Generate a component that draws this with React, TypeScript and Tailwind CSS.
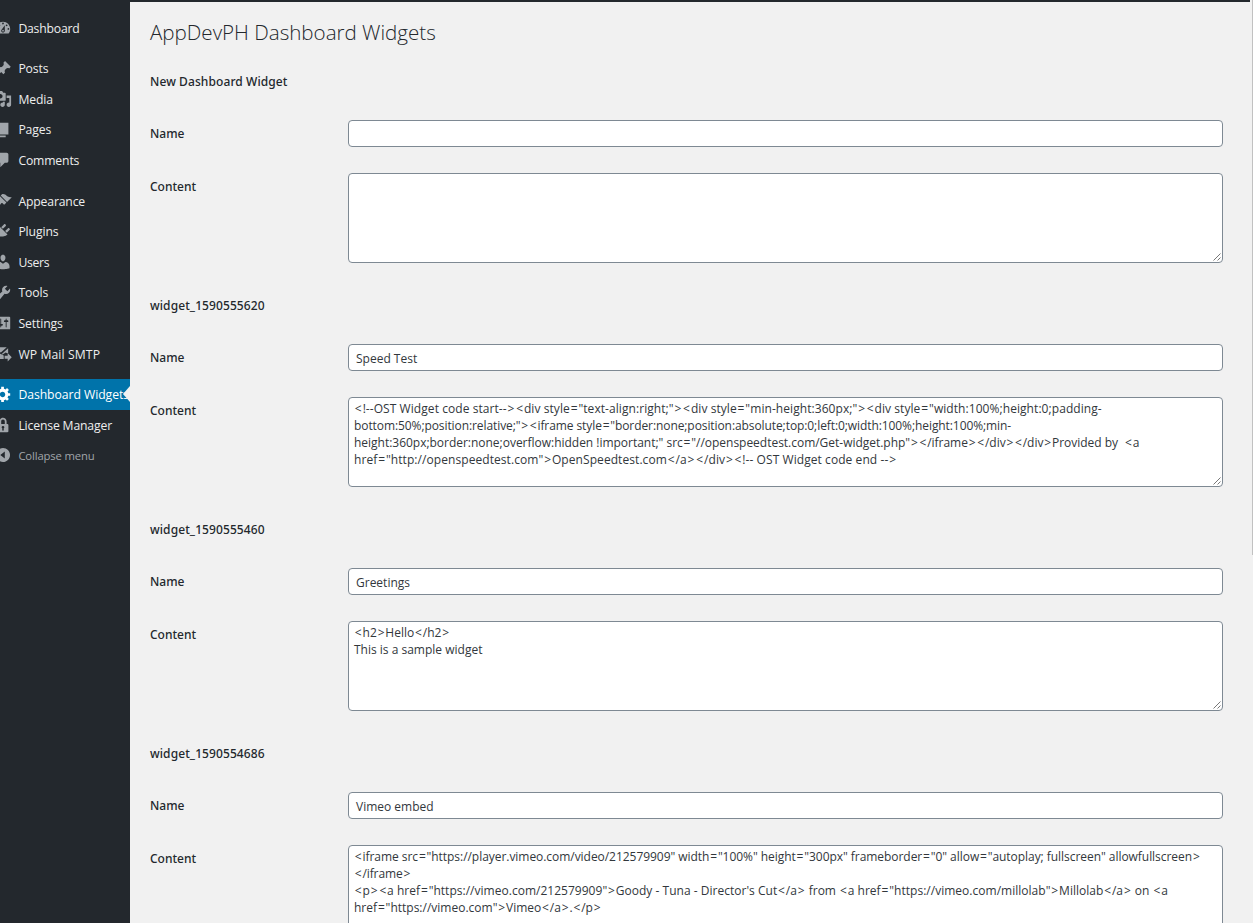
import type { ReactNode } from "react";

type MenuEntry = { label: string; d: string; gap?: boolean; active?: boolean; muted?: boolean; raised?: boolean; tracking?: string };

const menu: MenuEntry[] = [
  { label: "Dashboard", tracking: "tracking-[-0.2px]", d: "M3.76 16h12.48c1.1-1.37 1.76-3.11 1.76-5 0-4.42-3.58-8-8-8s-8 3.58-8 8c0 1.89.66 3.63 1.76 5zM10 4c.55 0 1 .45 1 1s-.45 1-1 1-1-.45-1-1 .45-1 1-1zM6 6c.55 0 1 .45 1 1s-.45 1-1 1-1-.45-1-1 .45-1 1-1zm8 0c.55 0 1 .45 1 1s-.45 1-1 1-1-.45-1-1 .45-1 1-1zm-5.37 5.55L12 7v6c0 1.1-.9 2-2 2s-2-.9-2-2c0-.57.24-1.08.63-1.45zM4 10c.55 0 1 .45 1 1s-.45 1-1 1-1-.45-1-1 .45-1 1-1zm12 0c.55 0 1 .45 1 1s-.45 1-1 1-1-.45-1-1 .45-1 1-1zm-5 3c0-.55-.45-1-1-1s-1 .45-1 1 .45 1 1 1 1-.45 1-1z" },
  { label: "Posts", gap: true, raised: true, d: "M10.44 3.02l1.82-1.82 6.36 6.35-1.83 1.82c-1.05-.68-2.48-.57-3.41.36l-.75.75c-.92.93-1.04 2.35-.35 3.41l-1.83 1.82-2.41-2.41-2.8 2.79c-.42.42-3.38 2.71-3.8 2.29s1.86-3.39 2.28-3.81l2.79-2.79L4.1 9.36l1.83-1.82c1.05.69 2.48.57 3.4-.36l.75-.75c.93-.92 1.05-2.35.36-3.41z" },
  { label: "Media", d: "M13 11V4c0-.55-.45-1-1-1h-1.67L9 1H5L3.67 3H2c-.55 0-1 .45-1 1v7c0 .55.45 1 1 1h10c.55 0 1-.45 1-1zM7 4.5c1.38 0 2.5 1.12 2.5 2.5S8.38 9.5 7 9.5 4.5 8.38 4.5 7 5.62 4.5 7 4.5zM14 6h5v10.5c0 1.38-1.12 2.5-2.5 2.5S14 17.88 14 16.5s1.12-2.5 2.5-2.5c.17 0 .34.02.5.05V9h-3V6zm-4 8.05V13h2v3.5c0 1.38-1.12 2.5-2.5 2.5S7 17.88 7 16.5 8.12 14 9.5 14c.17 0 .34.02.5.05z" },
  { label: "Pages", raised: true, d: "M6 15V2h10v13H6zm-1 1h8v2H3V5h2v11z" },
  { label: "Comments", tracking: "tracking-[-0.15px]", d: "M5 2h9c1.1 0 2 .9 2 2v7c0 1.1-.9 2-2 2h-2l-5 5v-5H5c-1.1 0-2-.9-2-2V4c0-1.1.9-2 2-2z" },
  { label: "Appearance", gap: true, tracking: "tracking-[-0.15px]", d: "M14.48 11.06L7.41 3.99l1.5-1.5c.5-.56 2.3-.47 3.51.32 1.21.8 1.43 1.28 2.91 2.1 1.18.64 2.45 1.26 4.45.85zm-.71.71L6.7 4.7 4.93 6.47c-.39.39-.39 1.02 0 1.41l1.06 1.06c.39.39.39 1.03 0 1.42-.6.6-1.43 1.11-2.21 1.69-.35.26-.7.53-1.01.84C1.43 14.23.4 16.08 1.4 17.07c.99 1 2.84-.03 4.18-1.36.31-.31.58-.66.85-1.02.57-.78 1.08-1.61 1.69-2.21.39-.39 1.02-.39 1.41 0l1.06 1.06c.39.39 1.02.39 1.41 0z" },
  { label: "Plugins", d: "M13.11 4.36L9.87 7.6 8 5.73l3.24-3.24c.35-.34 1.05-.2 1.56.32.52.51.66 1.21.31 1.55zm-8 1.77l.91-1.12 9.01 9.01-1.19.84c-.71.71-2.63 1.16-3.82 1.16H6.14L4.9 17.26c-.59.59-1.54.59-2.12 0-.59-.58-.59-1.53 0-2.12l1.24-1.24v-3.88c0-1.13.4-3.19 1.09-3.89zm7.26 3.97l3.24-3.24c.34-.35 1.04-.21 1.55.31.52.51.66 1.21.31 1.55l-3.24 3.25z" },
  { label: "Users", tracking: "tracking-[-0.3px]", d: "M10 9.25c-2.27 0-2.73-3.44-2.73-3.44C7 4.02 7.82 2 9.97 2c2.16 0 2.98 2.02 2.71 3.81 0 0-.41 3.44-2.68 3.44zm0 2.57L12.72 10c2.39 0 4.52 2.33 4.52 4.53v2.49s-3.65 1.13-7.24 1.13c-3.65 0-7.24-1.13-7.24-1.13v-2.49c0-2.25 1.94-4.48 4.47-4.48z" },
  { label: "Tools", raised: true, d: "M16.68 9.77c-1.34 1.34-3.3 1.67-4.95.99l-5.41 6.52c-.99.99-2.59.99-3.58 0s-.99-2.59 0-3.57l6.52-5.42c-.68-1.65-.35-3.61.99-4.95 1.28-1.28 3.12-1.62 4.72-1.06l-2.89 2.89 2.82 2.82 2.86-2.87c.53 1.58.18 3.39-1.08 4.65zM3.81 16.21c.4.39 1.04.39 1.43 0 .4-.4.4-1.04 0-1.43-.39-.4-1.03-.4-1.43 0-.39.39-.39 1.03 0 1.43z" },
  { label: "Settings", d: "M18 16V4c0-.55-.45-1-1-1H3c-.55 0-1 .45-1 1v12c0 .55.45 1 1 1h14c.55 0 1-.45 1-1zM8 11h1c.55 0 1 .45 1 1s-.45 1-1 1H8v1.5c0 .28-.22.5-.5.5s-.5-.22-.5-.5V13H6c-.55 0-1-.45-1-1s.45-1 1-1h1V5.5c0-.28.22-.5.5-.5s.5.22.5.5V11zm5-2h-1c-.55 0-1-.45-1-1s.45-1 1-1h1V5.5c0-.28.22-.5.5-.5s.5.22.5.5V7h1c.55 0 1 .45 1 1s-.45 1-1 1h-1v5.5c0 .28-.22.5-.5.5s-.5-.22-.5-.5V9z" },
  { label: "WP Mail SMTP", tracking: "tracking-[0.1px]", d: "M1 2.6h13.2L7.6 8.4 1 4zM15.7 3.6v6L13 8.2 9.6 10.6 8.6 10zM1 14.6l6-4.8 3.8 2v3.8H1zM11.8 12h3.4V9l4.5 4.6-4.5 4.6v-3h-3.4z" },
  { label: "Dashboard Widgets", gap: true, active: true, tracking: "tracking-[-0.05px]", d: "M18 12h-2.18c-.17.7-.44 1.35-.81 1.93l1.54 1.54-2.1 2.1-1.54-1.54c-.58.36-1.23.63-1.91.79V19H8v-2.18c-.68-.16-1.33-.43-1.91-.79l-1.54 1.54-2.12-2.12 1.54-1.54c-.36-.58-.63-1.23-.79-1.91H1V9.03h2.17c.16-.7.44-1.35.8-1.94L2.43 5.55l2.1-2.1 1.54 1.54c.58-.37 1.24-.64 1.93-.81V2h3v2.18c.68.16 1.33.43 1.91.79l1.54-1.54 2.12 2.12-1.54 1.54c.36.59.64 1.24.8 1.94H18V12zm-8.5 1.5c1.66 0 3-1.34 3-3s-1.34-3-3-3-3 1.34-3 3 1.34 3 3 3z" },
  { label: "License Manager", tracking: "tracking-[-0.15px]", d: "M14 9h1c.55 0 1 .45 1 1v7c0 .55-.45 1-1 1H5c-.55 0-1-.45-1-1v-7c0-.55.45-1 1-1h1V6c0-2.21 1.79-4 4-4s4 1.79 4 4v3zm-2 0V6c0-1.1-.9-2-2-2s-2 .9-2 2v3h4zm-1 7l-.36-2.15c.51-.24.86-.75.86-1.35 0-.83-.67-1.5-1.5-1.5s-1.5.67-1.5 1.5c0 .6.35 1.11.86 1.35L9 16h2z" },
  { label: "Collapse menu", muted: true, tracking: "tracking-[-0.15px]", d: "M10 2.2c4.3 0 7.8 3.5 7.8 7.8s-3.5 7.8-7.8 7.8S2.2 14.3 2.2 10 5.7 2.2 10 2.2zM12 14V6l-5 4z" },
];

function MenuItem({ item }: { item: MenuEntry }) {
  const tone = item.active ? "bg-[#0073aa] text-white" : item.muted ? "text-[#a0a5aa]" : "text-[#eeeeee]";
  const size = item.muted ? "text-[11.3px]" : "text-[12.2px]";
  return (
    <li className={`relative flex h-[30.6px] items-center ${tone} ${item.gap ? "mt-[9.9px]" : ""}`}>
      <svg viewBox="0 0 20 20" className={`-ml-[6px] size-[18px] shrink-0 ${item.active ? "fill-white" : "fill-[#a0a5aa]"}`}>
        <path fillRule="evenodd" d={item.d} />
      </svg>
      <span className={`ml-[6.4px] whitespace-nowrap leading-4 ${item.raised ? "pt-px" : "pt-[2px]"} ${size} ${item.tracking ?? "tracking-[-0.1px]"}`}>{item.label}</span>
      {item.active && (
        <svg viewBox="0 0 8 16" className="absolute right-0 top-[7px] h-4 w-2 fill-[#f1f1f1]">
          <path d="M8 0v16L1 8z" />
        </svg>
      )}
    </li>
  );
}

type Line = { text: string; tracking?: string };
type Widget = { title: string; name: string; lines: Line[] };

const widgets: Widget[] = [
  { title: "New Dashboard Widget", name: "", lines: [] },
  {
    title: "widget_1590555620",
    name: "Speed Test",
    lines: [
      { text: '<!--OST Widget code start--><div style="text-align:right;"><div style="min-height:360px;"><div style="width:100%;height:0;padding-', tracking: "tracking-[0.065px]" },
      { text: 'bottom:50%;position:relative;"><iframe style="border:none;position:absolute;top:0;left:0;width:100%;height:100%;min-', tracking: "tracking-[-0.085px]" },
      { text: 'height:360px;border:none;overflow:hidden !important;" src="//openspeedtest.com/Get-widget.php"></iframe></div></div>Provided by  <a', tracking: "tracking-[-0.02px]" },
      { text: 'href="http://openspeedtest.com">OpenSpeedtest.com</a></div><!-- OST Widget code end -->', tracking: "tracking-[0.07px]" },
    ],
  },
  { title: "widget_1590555460", name: "Greetings", lines: [{ text: "<h2>Hello</h2>" }, { text: "This is a sample widget" }] },
  {
    title: "widget_1590554686",
    name: "Vimeo embed",
    lines: [
      { text: '<iframe src="https://player.vimeo.com/video/212579909" width="100%" height="300px" frameborder="0" allow="autoplay; fullscreen" allowfullscreen>', tracking: "tracking-[-0.045px]" },
      { text: "</iframe>", tracking: "tracking-[-0.1px]" },
      { text: '<p><a href="https://vimeo.com/212579909">Goody - Tuna - Director\'s Cut</a> from <a href="https://vimeo.com/millolab">Millolab</a> on <a', tracking: "tracking-[0.02px]" },
      { text: 'href="https://vimeo.com">Vimeo</a>.</p>' },
    ],
  },
];

function CodeLine({ line }: { line: Line }) {
  return (
    <div className={`whitespace-pre ${line.tracking ?? ""}`}>
      {line.text.split(/([<>=])/).map((part, i) =>
        i % 2 === 1 ? <span key={i} className="px-[0.85px]">{part}</span> : part,
      )}
    </div>
  );
}

function Row({ label, children }: { label: string; children: ReactNode }) {
  return (
    <div className="flex">
      <div className="w-[198px] shrink-0 pt-[6px] font-['Noto_Sans','Open_Sans',sans-serif] text-[12px] font-medium leading-4 text-[#23282d]">{label}</div>
      {children}
    </div>
  );
}

function WidgetForm({ widget }: { widget: Widget }) {
  return (
    <section className="h-[224px] shrink-0">
      <h2 className="h-[47px] pt-px font-['Noto_Sans','Open_Sans',sans-serif] text-[12px] font-medium leading-4 tracking-[0.09px] text-[#23282d]">{widget.title}</h2>
      <div className="flex flex-col gap-[26px]">
        <Row label="Name">
          <div className="flex h-[27px] w-[875px] items-center rounded-[4px] border border-[#7e8993] bg-white px-[7px] pt-[3px] text-[12px] leading-4 text-[#32373c]">
            {widget.name}
          </div>
        </Row>
        <Row label="Content">
          <div className="relative h-[90px] w-[875px] rounded-[4px] border border-[#7e8993] bg-white px-[5px] pt-[2px] text-[12px] leading-[17px] text-[#32373c]">
            {widget.lines.map((line) => (
              <CodeLine key={line.text} line={line} />
            ))}
            <svg viewBox="0 0 8 8" className="absolute bottom-px right-px size-2 stroke-[#555]" strokeWidth="0.8">
              <path d="M0.5 7.5l7-7M4.5 7.5l3-3" />
            </svg>
          </div>
        </Row>
      </div>
    </section>
  );
}

export default function App() {
  return (
    <div className="relative flex h-[923px] w-[1253px] overflow-hidden bg-[#f1f1f1] font-['Open_Sans','Noto_Sans',sans-serif]">
      <nav className="w-[130px] shrink-0 bg-[#23282d] pt-[12.8px]">
        <ul>
          {menu.map((item) => (
            <MenuItem key={item.label} item={item} />
          ))}
        </ul>
      </nav>
      <main className="flex w-[1120px] shrink-0 flex-col border-t-2 border-[#23282d] pl-5">
        <h1 className="h-[71px] shrink-0 pt-[15px] text-[20.6px] font-light leading-[30px] tracking-[-0.02px] text-[#23282d]">AppDevPH Dashboard Widgets</h1>
        {widgets.map((widget) => (
          <WidgetForm key={widget.title} widget={widget} />
        ))}
      </main>
      <div className="ml-auto h-[555px] w-px bg-[#c1c1c1]" />
    </div>
  );
}
